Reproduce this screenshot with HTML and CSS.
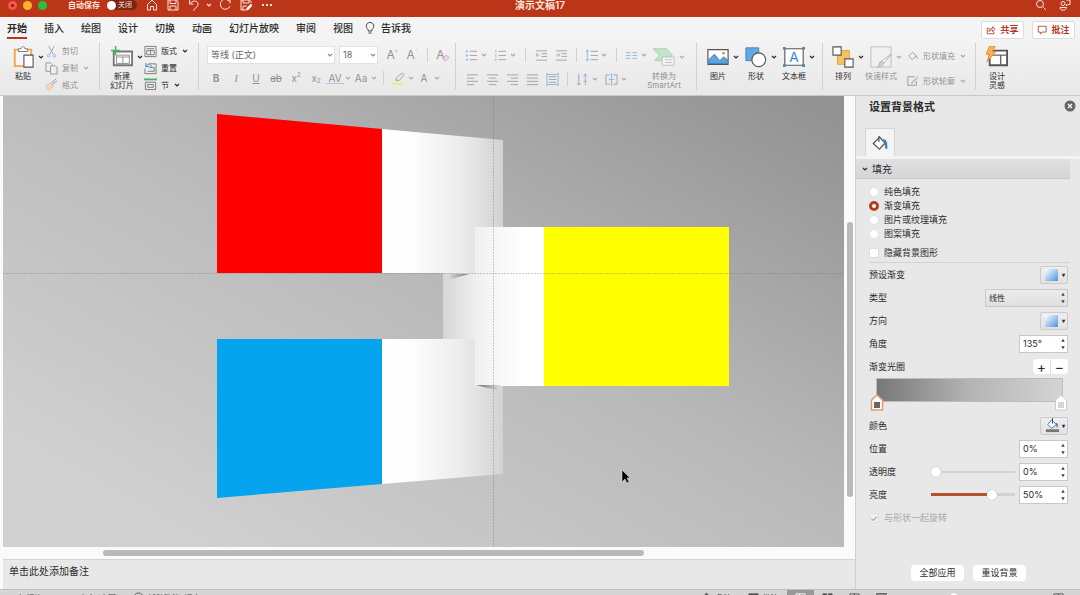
FILE: index.html
```
<!DOCTYPE html>
<html lang="zh-CN">
<head>
  <meta charset="UTF-8" />
  <meta name="viewport" content="width=device-width, initial-scale=1.0"/>
  <title>演示文稿17</title>
  <link rel="stylesheet" href="styles.css">
</head>
<body>
  <svg class="sprite" aria-hidden="true">
    <symbol id="caret" viewBox="0 0 8 8"><path d="M2 3l2 2 2-2" fill="none" stroke="currentColor" stroke-width="1.2"/></symbol>
    <symbol id="updown" viewBox="0 0 6 12"><path d="M3 1.500l1.500 2.500h-3zM3 10.500l1.500-2.500h-3z" fill="#444"/></symbol>
    <symbol id="bucket" viewBox="0 0 16 16"><path d="M7 2l5.500 6-5 5.500L2 8.500 7.500 3M7 2v5" fill="#fff" stroke="#555" stroke-width="1.100"/><path d="M10 5c3-1 5 1 4.500 8-1 .8-2 0-2-1l-.5-3.500z" fill="#3c82bd"/></symbol>
  </svg>

  <div class="app">
    <header class="titlebar">
      <div class="title-left">
        <span class="dot red"></span><span class="dot amber"></span><span class="dot green"></span>
        <span class="autosave">自动保存</span>
        <button class="toggle"><i></i>关闭</button>
        <button class="tb"><svg viewBox="0 0 12 12"><path d="M1.500 5.500L6 1l4.500 4.500V11H7.500V7.500h-3V11h-3z"/></svg></button>
        <button class="tb"><svg viewBox="0 0 12 12"><path d="M1 1h8.500L11 2.500V11H1zM3 1v3.500h6V1M3 11V7h6v4"/></svg></button>
        <button class="tb"><svg viewBox="0 0 12 12"><path d="M1.500 1v4h4M1.500 5C4 1 10 1 10 5c0 2-2 4-5 6.500"/></svg></button>
        <button class="tb slim"><svg viewBox="0 0 8 8"><use href="#caret"/></svg></button>
        <button class="tb"><svg viewBox="0 0 12 12"><path d="M8 1h3v3.500M10.500 2.500A5 5 0 1 0 11 7"/></svg></button>
        <button class="tb"><svg viewBox="0 0 12 12"><path d="M6 11H1V1h8.500L11 2.500V4M3 1v3h6V1M3 11V7h4"/><path d="M11 5l-4 4-.5 2 2-.5 3.500-4z" fill="#fff"/></svg></button>
        <button class="tb"><svg viewBox="0 0 12 12"><path d="M1 6h2M5 6h2M9 6h2" stroke-width="1.800"/></svg></button>
      </div>
      <h1>演示文稿17</h1>
      <div class="title-right">
        <button class="tb"><svg viewBox="0 0 12 12"><circle cx="5" cy="5" r="3.500"/><path d="M7.500 7.500L11 11"/></svg></button>
        <button class="tb"><svg viewBox="0 0 12 12"><circle cx="4" cy="4.500" r="2"/><path d="M1 8.500h6.500c0 3-6.500 4-6.500 0zM7 1h4v4.500H9L7.500 7V5"/></svg></button>
      </div>
    </header>

    <nav class="tabs">
      <a href="#" class="current">开始</a><a href="#">插入</a><a href="#">绘图</a><a href="#">设计</a><a href="#">切换</a><a href="#">动画</a><a href="#">幻灯片放映</a><a href="#">审阅</a><a href="#">视图</a>
      <a href="#" class="tell"><svg viewBox="0 0 10 14"><path d="M3.200 10V8.800C0 6 1 1.500 5 1.500S10 6 6.800 8.800V10zM3.500 12h3"/></svg>告诉我</a>
      <div class="tab-actions">
        <button><svg viewBox="0 0 12 12"><path d="M4 4H1.500v6.500h8V8M3.500 8c0-3 2-4 4.500-4V2l3 3-3 3V6C6 6 4.500 6.500 3.500 8z"/></svg>共享</button>
        <button><svg viewBox="0 0 12 12"><path d="M1.500 1.500h9.500v7H6L4 11V8.500H1.500z"/></svg>批注</button>
      </div>
    </nav>

    <section class="ribbon">
      <div class="group g-clip">
        <button class="big"><svg viewBox="0 0 24 24"><path d="M3 4h18v18H3z" fill="#f7f7f7" stroke="#eaa64b" stroke-width="2"/><path d="M7 6V3h3c0-3 4-3 4 0h3v3z" fill="#fff" stroke="#777"/><path d="M13 10h10v13H13z" fill="#fff" stroke="#555" stroke-width="1.200"/></svg><svg class="caret"><use href="#caret"/></svg><span>粘贴</span></button>
        <div class="stack dim">
          <button class="small"><svg viewBox="0 0 14 14"><path d="M4 1l5 9M10 1L5 10" stroke="#888"/><circle cx="4" cy="11.500" r="1.500" stroke="#6fa6d8"/><circle cx="10" cy="11.500" r="1.500" stroke="#6fa6d8"/></svg>剪切</button>
          <button class="small"><svg viewBox="0 0 14 14"><path d="M6 10H1V1h5l2 2M6 4h5l2 2v7H6z"/></svg>复制<svg class="caret"><use href="#caret"/></svg></button>
          <button class="small"><svg viewBox="0 0 14 14"><path d="M2 7l4-2 3 4-4 4c-2 0-3-1-4-3z" fill="#f4cfad" stroke="#dfb493"/><path d="M7 5l5-4M8 7l5-4"/></svg>格式</button>
        </div>
      </div>

      <div class="group g-slides">
        <button class="big"><svg viewBox="0 0 24 24"><path d="M3 6h20v15H3z" fill="#fff" stroke="#777" stroke-width="2"/><path d="M6 12h14M13 12v7M6 10v9h14v-9z" fill="none" stroke="#888"/><path d="M5 0v10M0 5h10" stroke="#3fb56e" stroke-width="1.600"/></svg><svg class="caret"><use href="#caret"/></svg><span>新建<br>幻灯片</span></button>
        <div class="stack">
          <button class="small"><svg viewBox="0 0 14 14"><path d="M1 1.500h12v11H1zM3 4h8M3 6h8v4.500H3zM7 6v4.500"/></svg>版式<svg class="caret"><use href="#caret"/></svg></button>
          <button class="small"><svg viewBox="0 0 14 14"><path d="M5 2h8v10.500H1V7M6 6h5v4H4"/><path d="M2 1v4h4M2 5c2-4 6-3 6 1" stroke="#3387c8"/></svg>重置</button>
          <button class="small"><svg viewBox="0 0 14 14"><path d="M0 1.500h14" stroke="#3fb56e" stroke-width="2"/><path d="M1.500 4.500h11v8h-11zM4 7h6v3H4z"/></svg>节<svg class="caret"><use href="#caret"/></svg></button>
        </div>
      </div>

      <div class="group g-font dim">
        <div class="tools">
          <label class="combo wide"><select aria-label="字体"><option>等线 (正文)</option></select><svg class="caret"><use href="#caret"/></svg></label>
          <label class="combo"><select aria-label="字号"><option>18</option></select><svg class="caret"><use href="#caret"/></svg></label>
          <button class="t large">A<sup>^</sup></button><button class="t large">A<sup>ˇ</sup></button>
          <i class="sep"></i>
          <button class="t large pink">A<svg viewBox="0 0 10 10"><path d="M1 6l4-4 4 3-4 4H3z" fill="#ecd0e8" stroke="#c48abf"/></svg></button>
        </div>
        <div class="tools">
          <button class="t"><b>B</b></button><button class="t serif"><em>I</em></button><button class="t"><u>U</u></button><button class="t"><s>ab</s></button><button class="t">x<sup>2</sup></button><button class="t">x<sub>2</sub></button>
          <button class="t split spacing">AV</button><svg class="caret"><use href="#caret"/></svg>
          <button class="t split">Aa</button><svg class="caret"><use href="#caret"/></svg>
          <i class="sep"></i>
          <button class="t split"><svg viewBox="0 0 14 14"><path d="M0 12.500h11" stroke="#ecec5d" stroke-width="2.500"/><path d="M4 9l1-3 6-5 2 2-5 6z"/></svg></button><svg class="caret"><use href="#caret"/></svg>
          <button class="t split">A</button><svg class="caret"><use href="#caret"/></svg>
        </div>
      </div>

      <div class="group g-para dim">
        <div class="para">
          <div class="tools">
            <button class="t ic"><svg viewBox="0 0 14 14"><path d="M5 2.500h8M5 7h8M5 11.500h8"/><path d="M1 2.500h2M1 7h2M1 11.500h2" stroke="#6ba5d6" stroke-width="2"/></svg></button><svg class="caret"><use href="#caret"/></svg>
            <button class="t ic"><svg viewBox="0 0 14 14"><path d="M5 2.500h8M5 7h8M5 11.500h8"/><path d="M2 1v3M2 5.500v3M2 10v3" stroke="#6ba5d6"/></svg></button><svg class="caret"><use href="#caret"/></svg>
            <i class="sep"></i>
            <button class="t"><svg viewBox="0 0 14 14"><path d="M1 2h12M7 5h6M7 8h6M1 12h12"/><path d="M5 6.500H1M3 4.500l-2 2 2 2" stroke="#6ba5d6"/></svg></button>
            <button class="t"><svg viewBox="0 0 14 14"><path d="M1 2h12M7 5h6M7 8h6M1 12h12"/><path d="M1 6.500h4M3 4.500l2 2-2 2" stroke="#6ba5d6"/></svg></button>
            <i class="sep"></i>
            <button class="t ic"><svg viewBox="0 0 14 14"><path d="M6 2.500h8M6 7h8M6 11.500h8"/><path d="M2.500 1v12M1 3l1.500-2L4 3M1 11l1.500 2L4 11" stroke="#6ba5d6"/></svg></button><svg class="caret"><use href="#caret"/></svg>
            <i class="sep"></i>
            <button class="t ic"><svg viewBox="0 0 14 14"><path d="M1 4h5M1 7h5M1 10h5M8 4h5M8 7h5M8 10h5" stroke="#6ba5d6"/></svg></button><svg class="caret"><use href="#caret"/></svg>
          </div>
          <div class="tools">
            <button class="t"><svg viewBox="0 0 14 14"><path d="M1 2h12M1 5.500h8M1 9h12M1 12.500h8"/></svg></button>
            <button class="t"><svg viewBox="0 0 14 14"><path d="M1 2h12M3 5.500h8M1 9h12M3 12.500h8"/></svg></button>
            <button class="t"><svg viewBox="0 0 14 14"><path d="M1 2h12M5 5.500h8M1 9h12M5 12.500h8"/></svg></button>
            <button class="t"><svg viewBox="0 0 14 14"><path d="M1 2h12M1 5.500h12M1 9h12M1 12.500h12"/></svg></button>
            <button class="t"><svg viewBox="0 0 14 14"><path d="M3 4h8M3 7h8M3 10h8"/><path d="M1 0v14M13 0v14M1 1.500h12M1 12.500h12" stroke="#6ba5d6"/></svg></button>
            <i class="sep"></i>
            <button class="t ic"><svg viewBox="0 0 14 14"><path d="M3 1v12M1 11l2 2 2-2"/><path d="M10 13V1M8 4l2-3 2 3M8 9h4" stroke="#6ba5d6"/></svg></button><svg class="caret"><use href="#caret"/></svg>
            <button class="t ic"><svg viewBox="0 0 14 14"><path d="M5 2H1v10h4M9 2h4v10H9"/><path d="M7 0v14M4 7h6" stroke="#6ba5d6"/></svg></button><svg class="caret"><use href="#caret"/></svg>
          </div>
        </div>
        <button class="big"><svg viewBox="0 0 24 24"><path d="M0 3h15l6 7-5 6H2l5-6z" fill="#b5dfbd" stroke="#8fc59a"/><path d="M10 12h13v9H10z" fill="#fafafa" stroke="#aaa"/><path d="M13 15h8M13 18h8" stroke="#aaa"/></svg><svg class="caret"><use href="#caret"/></svg><span>转换为<br>SmartArt</span></button>
      </div>

      <div class="group g-insert">
        <button class="big"><svg viewBox="0 0 24 24"><path d="M1 4h22v16H1z" fill="#fff" stroke="#555" stroke-width="1.300"/><path d="M2 15l6-6 6 7 4-4 4 3v4H2z" fill="#5ba5e3" stroke="#3478b4"/><circle cx="18" cy="8" r="1.600" fill="#eb9c3e"/></svg><svg class="caret"><use href="#caret"/></svg><span>图片</span></button>
        <button class="big"><svg viewBox="0 0 24 24"><path d="M1 2h14v14H1z" fill="#64a9e5" stroke="#3d82bf"/><circle cx="15" cy="15" r="7.500" fill="#fff" stroke="#555" stroke-width="1.200"/></svg><svg class="caret"><use href="#caret"/></svg><span>形状</span></button>
        <button class="big"><svg viewBox="0 0 24 24"><path d="M2 3h20v18H2z" fill="#fff" stroke="#555" stroke-width="1.200"/><path d="M0 1h3v3H0zM21 1h3v3h-3zM0 20h3v3H0zM21 20h3v3h-3z" fill="#468cc4"/><text x="12" y="17" text-anchor="middle" font-size="15" fill="#3785c5">A</text></svg><svg class="caret"><use href="#caret"/></svg><span>文本框</span></button>
      </div>

      <div class="group g-draw">
        <button class="big"><svg viewBox="0 0 24 24"><path d="M6 5h13v15H6z" fill="#f6c35e" stroke="#dca23e"/><path d="M1 1h9v9H1zM14 14h9v9h-9z" fill="#fff" stroke="#555" stroke-width="1.200"/></svg><svg class="caret"><use href="#caret"/></svg><span>排列</span></button>
        <button class="big dim"><svg viewBox="0 0 24 24"><path d="M1 1h22v22H1z" fill="#f1f1f1" stroke="#aaa"/><path d="M23 9l-8 10-3-2z" fill="#fff" stroke="#999"/><path d="M15 18c-1 5-4 5-7 5 3-2 1-6 4-6z" fill="#a7cdec" stroke="#83aed2"/></svg><svg class="caret"><use href="#caret"/></svg><span>快速样式</span></button>
        <div class="stack two dim">
          <button class="small"><svg viewBox="0 0 14 14"><path d="M6 2l5 5-5 4-4-4 4-4M11 7l1 3" /></svg>形状填充<svg class="caret"><use href="#caret"/></svg></button>
          <button class="small"><svg viewBox="0 0 14 14"><path d="M9 2H1v10h10V7"/><path d="M13 2l-6 7-2 1 1-2z" stroke="#6ba5d6"/></svg>形状轮廓<svg class="caret"><use href="#caret"/></svg></button>
        </div>
      </div>

      <div class="group g-idea">
        <button class="big"><svg viewBox="0 0 24 24"><path d="M4 5h19v16H4z" fill="#fff" stroke="#555" stroke-width="2"/><path d="M5 10h17M16 10v11" stroke="#666" stroke-width="1.500"/><path d="M4 0h6L7 6h4L1 17l3-8H0z" fill="#f8b45a" stroke="#e08a32"/></svg><span>设计<br>灵感</span></button>
      </div>
    </section>

    <main class="workspace">
      <div class="editor">
        <div class="canvas">
          <svg class="slide" viewBox="3 96 841 451" preserveAspectRatio="none">
            <defs>
              <linearGradient id="bg" gradientUnits="userSpaceOnUse" x1="640" y1="0" x2="300" y2="600"><stop offset="0" stop-color="#929292"/><stop offset=".5" stop-color="#b9b9b9"/><stop offset="1" stop-color="#d0d0d0"/></linearGradient>
              <linearGradient id="fold"><stop offset="0" stop-color="#fff"/><stop offset=".25" stop-color="#fdfdfd"/><stop offset=".65" stop-color="#ececec"/><stop offset="1" stop-color="#d2d2d2"/></linearGradient>
              <linearGradient id="mid"><stop offset="0" stop-color="#d6d6d6"/><stop offset=".35" stop-color="#f1f1f1"/><stop offset=".8" stop-color="#fff"/></linearGradient>
              <linearGradient id="shade"><stop offset="0" stop-color="#ddd"/><stop offset="1" stop-color="#777"/></linearGradient>
              <linearGradient id="shade2"><stop offset="0" stop-color="#666"/><stop offset="1" stop-color="#ddd"/></linearGradient>
            </defs>
            <rect x="3" y="96" width="841" height="451" fill="url(#bg)"/>
            <path d="M217 114l165 15v144H217z" fill="#f00"/>
            <path d="M382 129l121 11v133H382z" fill="url(#fold)"/>
            <path d="M217 339h165v145l-165 14z" fill="#06a4ee"/>
            <path d="M382 339h121v135l-121 10z" fill="url(#fold)"/>
            <path d="M475 227h69v159h-69v-47h-32v-66h32z" fill="url(#mid)"/>
            <path d="M544 227h185v159H544z" fill="#ff0"/>
            <path d="M448 274h21l-21 6z" fill="url(#shade)"/>
            <path d="M476 385h24v6z" fill="url(#shade2)"/>
            <path d="M475 227h69v159h-68" fill="url(#mid)" fill-opacity="0"/>
            <path d="M3 273.500h841M493.500 96v451" fill="none" stroke="#777" stroke-opacity=".38" stroke-dasharray="2 1"/>
            <path d="M622 470v12l3-3 2 4 2-1-2-4h3z" fill="#000" stroke="#eee" stroke-width=".5"/>
          </svg>
          <div class="vscroll"><i></i></div>
        </div>
        <div class="hscroll"><i></i></div>
        <div class="notes">单击此处添加备注</div>
      </div>

      <aside class="pane">
        <div class="pane-head"><h2>设置背景格式</h2><button class="close"><svg viewBox="0 0 12 12"><circle cx="6" cy="6" r="5.500" fill="#666"/><path d="M4 4l4 4M8 4L4 8" stroke="#fff" stroke-width="1.200"/></svg></button></div>
        <div class="pane-tabs"><button><svg viewBox="0 0 16 16"><use href="#bucket"/></svg></button></div>
        <button class="section"><svg class="caret"><use href="#caret"/></svg>填充</button>
        <div class="choices">
          <label><input type="radio" name="fill">纯色填充</label>
          <label><input type="radio" name="fill" checked>渐变填充</label>
          <label><input type="radio" name="fill">图片或纹理填充</label>
          <label><input type="radio" name="fill">图案填充</label>
          <label class="hide"><input type="checkbox">隐藏背景图形</label>
        </div>
        <div class="rows">
          <div class="row"><span>预设渐变</span><button class="swatch"><i></i><b>▾</b></button></div>
          <div class="row"><label for="type">类型</label><div class="picker"><select id="type"><option>线性</option></select><svg><use href="#updown"/></svg></div></div>
          <div class="row"><span>方向</span><button class="swatch"><i></i><b>▾</b></button></div>
          <div class="row"><label for="angle">角度</label><div class="spin"><input id="angle" type="text" value="135°"><svg><use href="#updown"/></svg></div></div>
          <div class="row"><span>渐变光圈</span><div class="plusminus"><button>+</button><button>−</button></div></div>
        </div>
        <div class="stops">
          <div class="bar"></div>
          <button class="stop first"><svg viewBox="0 0 14 17"><path d="M1.500 6L7 1l5.500 5v10h-11z" fill="#fff" stroke="#e59a6b" stroke-width="1.500"/><path d="M4 8h6v6H4z" fill="#666"/></svg></button>
          <button class="stop last"><svg viewBox="0 0 14 17"><path d="M1.500 6L7 1l5.500 5v10h-11z" fill="#fff" stroke="#ccc"/><path d="M4 8h6v6H4z" fill="#d5d5d5"/></svg></button>
        </div>
        <div class="rows">
          <div class="row"><span>颜色</span><button class="swatch"><svg viewBox="0 0 16 16"><path d="M7 2l5 5-5 4-4-4z" fill="#fff" stroke="#3b73b8"/><path d="M8 0v6" stroke="#345"/><path d="M11 5c3 0 3 3 2 6z" fill="#3b73b8"/><path d="M1 12h14v3H1z" fill="#777"/></svg><b>▾</b></button></div>
          <div class="row"><label for="pos">位置</label><div class="spin"><input id="pos" type="text" value="0%"><svg><use href="#updown"/></svg></div></div>
          <div class="row"><label for="alpha">透明度</label><input class="range zero" type="range" value="0" aria-label="透明度"><div class="spin"><input id="alpha" type="text" value="0%"><svg><use href="#updown"/></svg></div></div>
          <div class="row"><label for="light">亮度</label><input class="range bright" type="range" value="75" aria-label="亮度"><div class="spin"><input id="light" type="text" value="50%"><svg><use href="#updown"/></svg></div></div>
          <label class="row rotate"><input type="checkbox" checked disabled>与形状一起旋转</label>
        </div>
        <div class="pane-foot"><button>全部应用</button><button>重设背景</button></div>
      </aside>
    </main>

    <footer class="status">
      <span>幻灯片 9 / 10</span><span>中文 (中国)</span>
      <span class="access"><svg viewBox="0 0 12 12"><circle cx="6" cy="6" r="5"/><path d="M3 4.500h6M6 4.500V7l-2 3M6 7l2 3"/></svg>辅助功能: 调查</span>
      <div class="status-right">
        <button><svg viewBox="0 0 12 12"><path d="M6 1l3 4H3zM1 7h10M1 10h10" fill="#555"/></svg>备注</button>
        <button><svg viewBox="0 0 12 12"><path d="M1 2h10v7H1z" fill="#555"/></svg>批注</button>
        <div class="views">
          <button class="on"><svg viewBox="0 0 12 12"><path d="M1 2h10v9H1zM5 2v9"/></svg></button>
          <button><svg viewBox="0 0 12 12"><path d="M1 2h4v4H1zM7 2h4v4H7zM1 8h4v3H1zM7 8h4v3H7z" fill="#555"/></svg></button>
          <button><svg viewBox="0 0 12 12"><path d="M1 2h5v9H1zM6 2h5v9H6z"/></svg></button>
          <button><svg viewBox="0 0 12 12"><path d="M0 2h12M1 2h10v6H1zM6 8v4"/></svg></button>
        </div>
        <input class="range zoom" type="range" value="75" aria-label="缩放">
        <span>+</span><span>100%</span>
        <button class="fit"><svg viewBox="0 0 12 12"><path d="M1 2h10v9H1zM6 2v9M3 6h6"/></svg></button>
      </div>
    </footer>
  </div>
</body>
</html>
```
FILE: styles.css
```
* {
  box-sizing: border-box;
}

body {
  margin: 0;
  font-family: Inter, "Noto Sans CJK SC", sans-serif;
  font-size: 8px;
  line-height: 10px;
  color: #2b2b2b;
  background: #e9e9e9;
}

button, input, select {
  font: inherit;
  color: inherit;
  margin: 0;
  padding: 0;
  border: 0;
  background: none;
  appearance: none;
}

a {
  color: inherit;
  text-decoration: none;
}

svg {
  display: block;
  flex: none;
}

.sprite {
  position: absolute;
  width: 0;
  height: 0;
}

.app {
  height: 100vh;
  min-width: 1060px;
  display: flex;
  flex-direction: column;
  overflow: hidden;
}

.caret {
  width: 8px;
  height: 8px;
}

/* title bar */
.titlebar {
  flex: none;
  display: grid;
  grid-template-columns: 1fr auto 1fr;
  align-items: center;
  height: 24px;
  margin-top: -7px;
  background: #bb3619;
  color: #fbe4dc;
}

.titlebar h1 {
  margin: 0;
  font-size: 10px;
  font-weight: 600;
}

.title-left, .title-right {
  display: flex;
  align-items: center;
}

.title-left {
  padding-left: 8px;
}

.title-right {
  justify-content: flex-end;
  gap: 12px;
  padding-right: 9px;
}

.dot {
  width: 9px;
  height: 9px;
  margin-right: 6px;
  border-radius: 50%;
}

.red {
  border: 3px solid #f5574e;
  background: #8c1a12;
}

.amber {
  background: #f6b32d;
}

.green {
  background: #27c03c;
}

.autosave {
  margin: 0 7px 0 15px;
  font-weight: 600;
}

.toggle {
  display: flex;
  align-items: center;
  gap: 2px;
  width: 30px;
  height: 10px;
  margin-right: 9px;
  border-radius: 5px;
  background: #7b2412;
  font-size: 7px;
}

.toggle i {
  width: 9px;
  height: 9px;
  border-radius: 50%;
  background: #fff;
}

.tb {
  width: 12px;
  margin-right: 9px;
}

.tb.slim {
  width: 8px;
  margin: 0 6px 0 -4px;
}

.title-right .tb {
  margin-right: 0;
}

.tb svg {
  width: 100%;
  fill: none;
  stroke: currentColor;
}

/* tabs */
.tabs {
  flex: none;
  display: flex;
  align-items: center;
  gap: 17px;
  height: 24px;
  padding: 0 5px 0 7px;
  background: #f5f4f4;
  font-size: 10px;
  font-weight: 500;
}

.tabs a {
  line-height: 18px;
  border-bottom: 2px solid transparent;
  white-space: nowrap;
}

.tabs .current {
  font-weight: 700;
  border-color: #bb3619;
}

.tell {
  display: flex;
  align-items: center;
  gap: 6px;
  margin-left: -5px;
}

.tell svg {
  width: 10px;
  height: 14px;
  fill: none;
  stroke: #444;
}

.tab-actions {
  display: flex;
  gap: 8px;
  margin: 2px 0 0 auto;
}

.tab-actions button {
  display: flex;
  align-items: center;
  justify-content: center;
  gap: 4px;
  width: 43px;
  height: 18px;
  border: 1px solid #dcdcdc;
  border-radius: 2px;
  background: #fff;
  color: #b3391f;
  font-size: 9px;
  font-weight: 600;
}

.tab-actions svg {
  width: 10px;
  height: 10px;
  fill: none;
  stroke: currentColor;
}

/* ribbon */
.ribbon {
  flex: none;
  display: flex;
  height: 55px;
  padding: 2px 0 5px;
  background: linear-gradient(#f4f3f3, #e8e8e8);
  border-bottom: 1px solid #c9c9c9;
}

.group {
  display: flex;
  border-right: 1px solid #d2d2d2;
}

.g-clip {
  width: 100px;
  padding-left: 11px;
}

.g-slides {
  width: 99px;
  padding-left: 10px;
}

.g-font {
  width: 257px;
  padding-left: 7px;
  flex-direction: column;
}

.g-para {
  width: 241px;
  padding-left: 6px;
}

.g-insert {
  width: 126px;
  padding-left: 9px;
  gap: 4px;
}

.g-draw {
  width: 153px;
  padding-left: 8px;
  gap: 4px;
}

.g-idea {
  padding-left: 9px;
  border: 0;
}

.dim {
  color: #939393;
}

.dim svg {
  opacity: .75;
}

.big {
  display: grid;
  grid-template-columns: 24px 10px;
  grid-template-rows: 27px auto;
  align-content: start;
  justify-items: center;
  align-items: center;
  height: 48px;
  line-height: 9px;
}

.big svg:first-child {
  width: 22px;
  height: 22px;
}

.big .caret {
  justify-self: end;
}

.big span {
  grid-column: 1;
  grid-row: 2;
  padding-top: 2px;
  white-space: nowrap;
  text-align: center;
}

.stack {
  display: flex;
  flex-direction: column;
  height: 50px;
}

.small {
  flex: 1;
  display: flex;
  align-items: center;
  gap: 4px;
  white-space: nowrap;
}

.small svg:first-child {
  width: 13px;
  height: 13px;
  fill: none;
  stroke: #777;
}

.two .small svg:first-child {
  width: 12px;
  height: 12px;
}

.tools {
  display: flex;
  align-items: center;
  height: 24px;
}

.combo {
  display: flex;
  align-items: center;
  width: 39px;
  height: 18px;
  margin: 0 4px 0 1px;
  background: #fff;
  border: 1px solid #e2e2e2;
  font-size: 9px;
  color: #666;
}

.combo.wide {
  width: 128px;
  margin-right: 3px;
}

.combo select {
  flex: 1;
  min-width: 0;
  height: 16px;
  padding-left: 3px;
}

.t {
  display: flex;
  align-items: center;
  justify-content: center;
  width: 20px;
  height: 18px;
  font-size: 10px;
}

.t.large {
  font-size: 12px;
}

.t sup, .t sub {
  font-size: 6px;
  line-height: 6px;
  padding: 3px 0;
}

.t sup {
  align-self: flex-start;
}

.t sub {
  align-self: flex-end;
}

.t svg {
  width: 13px;
  height: 13px;
  fill: none;
  stroke: #888;
}

.t.ic, .t.split {
  width: 18px;
}

.t.pink svg {
  width: 8px;
  margin-left: -3px;
  align-self: flex-end;
}

.t.serif {
  font-family: "Liberation Serif", serif;
  font-size: 11px;
}

.spacing {
  border-bottom: 1px solid #a5c8e4;
  height: 12px;
}

.sep {
  width: 1px;
  height: 14px;
  margin: 0 5px;
  background: #d0d0d0;
}

.para {
  width: 190px;
}

.para .caret {
  margin-right: 3px;
}

/* slide editor */
.workspace {
  flex: 1;
  min-height: 0;
  display: flex;
}

.editor {
  flex: 1;
  min-width: 0;
  display: flex;
  flex-direction: column;
  padding-left: 3px;
  background: #fafafa;
}

.canvas {
  flex: 1;
  min-height: 0;
  display: flex;
}

.slide {
  flex: 1;
  min-width: 0;
  height: 100%;
}

.vscroll {
  width: 11px;
  display: flex;
  flex-direction: column;
  align-items: center;
}

.vscroll i {
  width: 6px;
  height: 61%;
  margin-top: 126px;
  border-radius: 3px;
  background: #b9b9b9;
}

.hscroll {
  height: 12px;
  padding: 3px 0 0 100px;
}

.hscroll i {
  display: block;
  width: 72%;
  height: 6px;
  border-radius: 3px;
  background: #b9b9b9;
}

.notes {
  height: 30px;
  padding: 7px 6px;
  border-top: 1px solid #d3d3d3;
  background: #e8e8e8;
  font-family: "Liberation Serif", "Noto Sans CJK SC", serif;
  font-size: 10px;
}

/* format pane */
.pane {
  width: 225px;
  display: flex;
  flex-direction: column;
  border-left: 1px solid #cfcfcf;
  background: #e8e8e8;
  font-size: 9px;
}

.pane-head {
  display: flex;
  justify-content: space-between;
  height: 32px;
  padding: 4px 4px 0 13px;
}

.pane h2 {
  margin: 0;
  font-size: 11px;
  line-height: 14px;
  font-weight: 600;
}

.close {
  width: 12px;
  height: 12px;
}

.pane-tabs {
  height: 31px;
  padding-left: 9px;
  border-bottom: 3px solid #f4f4f4;
}

.pane-tabs button {
  display: grid;
  place-items: center;
  width: 30px;
  height: 28px;
  background: #f4f4f4;
  border: 1px solid #d5d5d5;
  border-bottom: 0;
}

.pane-tabs svg {
  width: 18px;
  height: 18px;
}

.section {
  display: flex;
  align-items: center;
  gap: 3px;
  height: 20px;
  margin-right: 10px;
  padding-left: 5px;
  background: linear-gradient(#e0e0e0, #d6d6d6);
  border-bottom: 1px solid #c8c8c8;
  font-size: 10px;
}

.choices {
  margin: 0 10px 0 13px;
  padding-top: 6px;
  height: 84px;
  border-bottom: 1px solid #d3d3d3;
}

.choices label {
  display: flex;
  align-items: center;
  gap: 5px;
  height: 14px;
}

.choices .hide {
  margin-top: 5px;
}

input[type="radio"] {
  width: 10px;
  height: 10px;
  border-radius: 50%;
  background: #fff;
  border: 1px solid #e2e2e2;
}

input[type="radio"]:checked {
  border: 3px solid #b8401f;
}

input[type="checkbox"] {
  width: 10px;
  height: 10px;
  border-radius: 2px;
  background: #fff;
  border: 1px solid #dedede;
}

.rows {
  padding: 0 12px 0 13px;
}

.row {
  display: flex;
  align-items: center;
  justify-content: space-between;
  height: 23px;
}

.swatch {
  display: flex;
  align-items: center;
  justify-content: space-between;
  width: 28px;
  height: 18px;
  padding: 0 2px 0 4px;
  border: 1px solid #cbcbcb;
  border-radius: 2px;
  background: linear-gradient(#eee, #e2e2e2);
}

.swatch i {
  width: 13px;
  height: 12px;
  background: linear-gradient(135deg, #fff, #4f92df);
}

.swatch svg {
  width: 15px;
  height: 15px;
}

.swatch b {
  font-size: 6px;
}

.picker, .spin {
  display: flex;
  align-items: center;
  width: 49px;
  height: 18px;
  border: 1px solid #c8c8c8;
  background: #fff;
}

.picker {
  width: 83px;
  background: linear-gradient(#ececec, #e0e0e0);
  font-size: 8px;
}

.picker select, .spin input {
  flex: 1;
  min-width: 0;
  width: 0;
  height: 16px;
  padding-left: 3px;
}

.picker svg, .spin svg {
  width: 8px;
  height: 14px;
}

.plusminus {
  display: flex;
  width: 35px;
  height: 15px;
  border-radius: 4px;
  background: #fff;
}

.plusminus button {
  flex: 1;
  font-size: 14px;
}

.plusminus button + button {
  border-left: 1px solid #ddd;
}

.stops {
  position: relative;
  height: 36px;
  padding: 0 17px 0 20px;
}

.bar {
  height: 24px;
  border: 1px solid #bcbcbc;
  background: linear-gradient(90deg, #777, #b4b4b4 50%, #d4d4d4);
}

.stop {
  position: absolute;
  top: 16px;
  width: 14px;
}

.first {
  left: 14px;
}

.last {
  right: 12px;
}

.range {
  width: 84px;
  height: 12px;
  margin-left: auto;
  margin-right: 4px;
  background: linear-gradient(#d2d2d2, #d2d2d2) center / 100% 2px no-repeat;
}

.range::-webkit-slider-thumb {
  appearance: none;
  width: 10px;
  height: 10px;
  border-radius: 50%;
  background: #fff;
  box-shadow: 0 0 1px #999;
}

.bright {
  background: linear-gradient(90deg, #b5532f 70%, #d2d2d2 70%) center / 100% 3px no-repeat;
}

.row.rotate {
  justify-content: flex-start;
  gap: 5px;
  color: #aaa;
}

.rotate input {
  display: grid;
  place-items: center;
  background: #efefef;
}

.rotate input::before {
  content: "✓";
  font-size: 9px;
  color: #888;
}

.pane-foot {
  display: flex;
  justify-content: center;
  gap: 9px;
  margin: auto 0 8px;
  padding-left: 1px;
}

.pane-foot button {
  width: 53px;
  height: 16px;
  border-radius: 4px;
  background: #fff;
}

/* status bar */
.status {
  flex: none;
  display: flex;
  align-items: center;
  gap: 14px;
  height: 16px;
  margin-bottom: -10px;
  padding-left: 18px;
  border-top: 1px solid #bdbdbd;
  background: linear-gradient(#d9d9d9, #c9c9c9);
  color: #444;
}

.status svg {
  width: 11px;
  height: 11px;
  fill: none;
  stroke: #555;
}

.access, .status-right, .status-right button {
  display: flex;
  align-items: center;
  gap: 4px;
}

.status-right {
  margin-left: auto;
  gap: 16px;
  padding-right: 16px;
}

.status .zoom {
  width: 72px;
}

.views {
  display: flex;
  margin: 0 -8px;
}

.status .views button {
  width: 27px;
  height: 15px;
  justify-content: center;
}

.views .on {
  background: #999;
}

.views .on svg {
  stroke: #fff;
}
```
